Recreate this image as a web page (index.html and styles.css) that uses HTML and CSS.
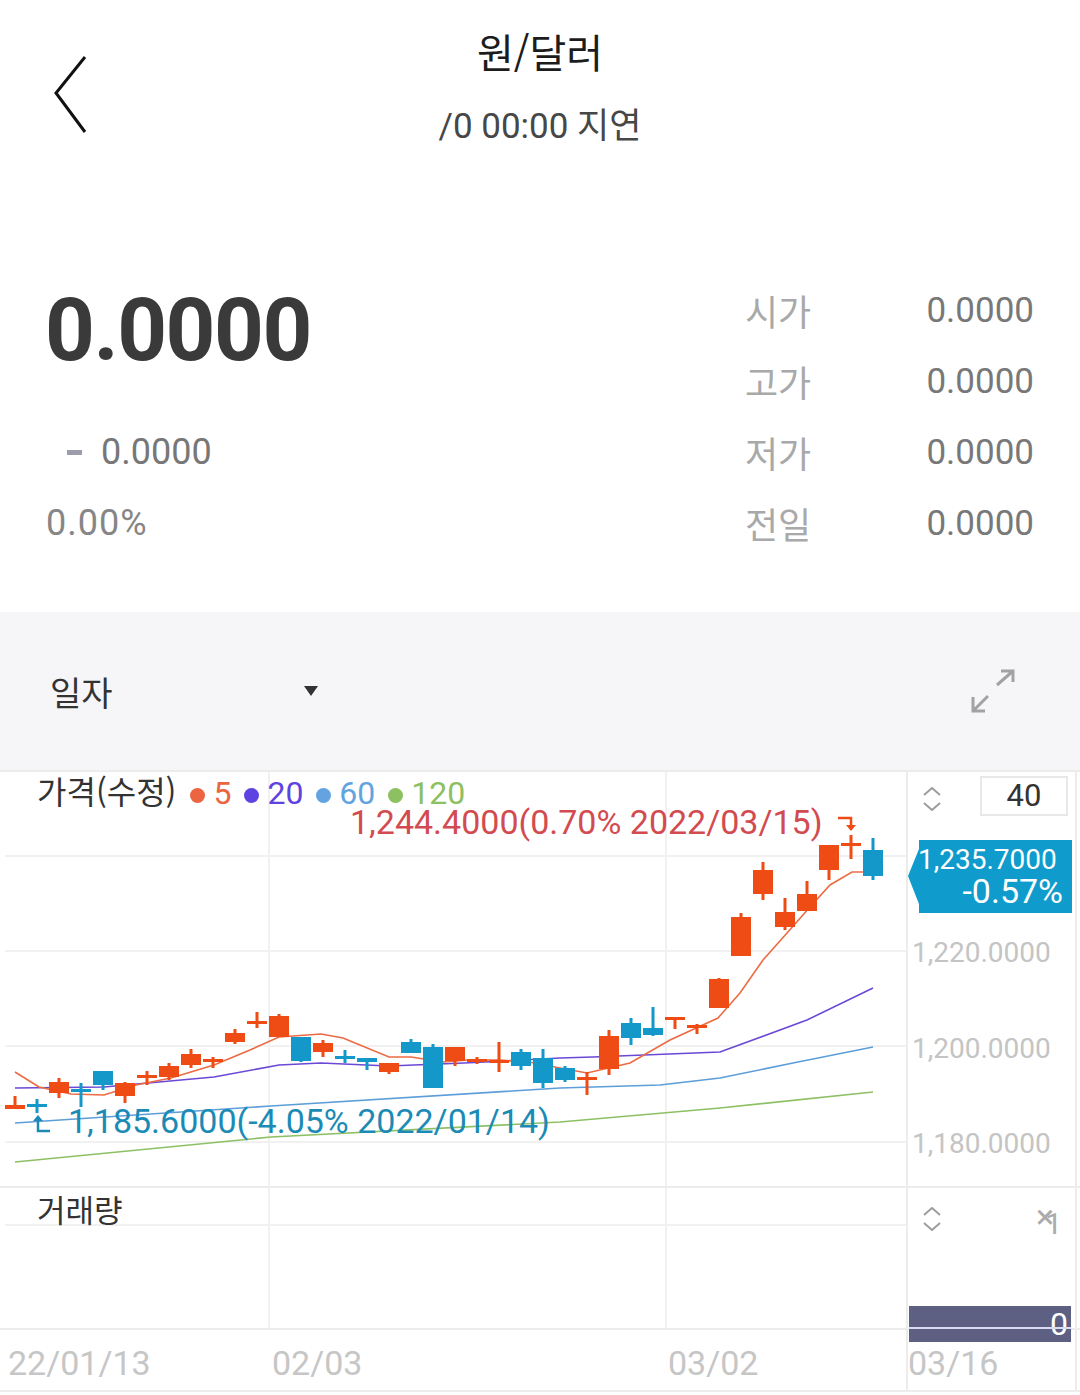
FILE: index.html
```html
<!DOCTYPE html>
<html lang="ko">
<head>
  <meta charset="UTF-8">
  <meta name="viewport" content="width=device-width, initial-scale=1.0">
  <title>원/달러</title>
  <link rel="stylesheet" href="styles.css">
</head>
<body>
<div class="screen">
  <header class="top-bar">
    <button class="back-btn" aria-label="뒤로">
      <svg width="40" height="82" viewBox="0 0 40 82"><polyline points="35,4 6,40 35,79" fill="none" stroke="#111" stroke-width="3"/></svg>
    </button>
    <div class="title-block">
      <h1 class="title">원/달러</h1>
      <div class="subtitle">/0 00:00 지연</div>
    </div>
    <div></div>
  </header>

  <section class="quote">
    <div class="quote-main">
      <div class="price">0.0000</div>
      <div class="change"><span class="change-mark"></span>0.0000</div>
      <div class="rate">0.00%</div>
    </div>
    <dl class="quote-table">
      <dt>시가</dt><dd>0.0000</dd>
      <dt>고가</dt><dd>0.0000</dd>
      <dt>저가</dt><dd>0.0000</dd>
      <dt>전일</dt><dd>0.0000</dd>
    </dl>
  </section>

  <div class="chart-toolbar">
    <div class="period-select">
      <span>일자</span>
      <span class="caret"></span>
    </div>
    <svg class="expand-icon" width="48" height="48" viewBox="0 0 48 48">
      <path d="M28 18L44 4M32 4H44V15M19 29L4 44M4 30V44H16" fill="none" stroke="#a2a2a2" stroke-width="3"/>
    </svg>
  </div>

  <section class="chart">
    <div class="pane pane-price">
      <div class="plot">
        <svg class="plot-svg" width="906" height="414" viewBox="0 772 906 414">
          <path class="grid-line" d="M5 856H906M5 951H906M5 1046H906M5 1142H906M269 772V1186M666 772V1186"/>
          <polyline class="ma ma120" points="15,1162 271,1137 560,1122 720,1108 873,1092"/>
          <polyline class="ma ma60" points="15,1123 271,1106 560,1088 660,1085 720,1078 793,1063 873,1047"/>
          <polyline class="ma ma20" points="15,1088 104,1087 214,1077 279,1065 321,1063 389,1066 464,1063 560,1058 593,1057 720,1052 807,1020 873,988"/>
          <polyline class="ma ma5" points="15,1072 39,1087 71,1094 104,1095 136,1085 171,1078 214,1065 250,1050 279,1037 321,1034 343,1038 389,1057 411,1057 443,1062 468,1060 500,1060 529,1062 560,1068 587,1073 630,1063 670,1040 718,1018 740,993 763,960 787,933 810,907 830,885 852,872 873,872"/>

          <g class="candle-up">
            <path class="wick" d="M15 1096V1109M59 1078V1098M125 1082V1103M147 1071V1085M169 1063V1080M191 1049V1068M213 1057V1068M235 1029V1044M257 1012V1028M279 1014V1037M323 1040V1057M389 1063V1074M455 1047V1066M477 1057V1064M499 1042V1072M587 1072V1095M609 1030V1075M675 1017V1029M697 1024V1034M719 978V1008M741 913V956M763 862V900M785 898V930M807 881V911M829 845V880M851 835V859"/>
            <rect x="5" y="1105" width="20" height="4"/>
            <rect x="49" y="1082" width="20" height="11"/>
            <rect x="115" y="1083" width="20" height="13"/>
            <rect x="137" y="1075" width="20" height="3"/>
            <rect x="159" y="1066" width="20" height="11"/>
            <rect x="181" y="1054" width="20" height="11"/>
            <rect x="203" y="1059" width="20" height="3"/>
            <rect x="225" y="1033" width="20" height="9"/>
            <rect x="247" y="1021" width="20" height="3"/>
            <rect x="269" y="1016" width="20" height="21"/>
            <rect x="313" y="1043" width="20" height="9"/>
            <rect x="379" y="1063" width="20" height="9"/>
            <rect x="445" y="1047" width="20" height="14"/>
            <rect x="467" y="1059" width="20" height="3"/>
            <rect x="489" y="1060" width="20" height="3"/>
            <rect x="577" y="1077" width="20" height="3"/>
            <rect x="599" y="1036" width="20" height="33"/>
            <rect x="665" y="1017" width="20" height="3"/>
            <rect x="687" y="1025" width="20" height="3"/>
            <rect x="709" y="979" width="20" height="29"/>
            <rect x="731" y="917" width="20" height="39"/>
            <rect x="753" y="870" width="20" height="24"/>
            <rect x="775" y="912" width="20" height="15"/>
            <rect x="797" y="894" width="20" height="17"/>
            <rect x="819" y="845" width="20" height="25"/>
            <rect x="841" y="843" width="20" height="3"/>
          </g>

          <g class="candle-down">
            <path class="wick" d="M37 1099V1113M81 1083V1107M103 1071V1090M301 1037V1062M345 1050V1063M367 1058V1070M411 1039V1053M433 1044V1088M521 1049V1070M543 1049V1088M565 1066V1082M631 1018V1045M653 1007V1036M873 838V880"/>
            <rect x="27" y="1104" width="20" height="3"/>
            <rect x="71" y="1089" width="20" height="3"/>
            <rect x="93" y="1071" width="20" height="14"/>
            <rect x="291" y="1037" width="20" height="24"/>
            <rect x="335" y="1056" width="20" height="3"/>
            <rect x="357" y="1058" width="20" height="4"/>
            <rect x="401" y="1042" width="20" height="11"/>
            <rect x="423" y="1047" width="20" height="41"/>
            <rect x="511" y="1052" width="20" height="14"/>
            <rect x="533" y="1058" width="20" height="25"/>
            <rect x="555" y="1068" width="20" height="12"/>
            <rect x="621" y="1023" width="20" height="15"/>
            <rect x="643" y="1028" width="20" height="7"/>
            <rect x="863" y="850" width="20" height="26"/>
          </g>

          <g class="mark-max">
            <path d="M838 818H851V826" fill="none"/>
            <polygon points="846,825 856,825 851,831"/>
          </g>
          <g class="mark-min">
            <path d="M38 1120V1131H50" fill="none"/>
            <polygon points="33,1121 43,1121 38,1115"/>
          </g>
          <text class="mark-label label-max" x="350" y="834">1,244.4000(0.70% 2022/03/15)</text>
          <text class="mark-label label-min" x="68" y="1133">1,185.6000(-4.05% 2022/01/14)</text>
        </svg>
        <div class="legend">
          <span class="legend-title">가격(수정)</span><span class="legend-item c-ma5"><i class="dot first"></i>5</span><span class="legend-item c-ma20"><i class="dot"></i>20</span><span class="legend-item c-ma60"><i class="dot"></i>60</span><span class="legend-item c-ma120"><i class="dot"></i>120</span>
        </div>
      </div>
      <div class="axis">
        <div class="axis-controls">
          <svg class="chev" width="18" height="24" viewBox="0 0 18 24"><path d="M1 8L9 1L17 8M1 16L9 23L17 16" fill="none" stroke="#9d9d9d" stroke-width="2"/></svg>
          <div class="scale-box">40</div>
        </div>
        <div class="axis-ticks">
          <div class="tick">1,220.0000</div>
          <div class="tick">1,200.0000</div>
          <div class="tick">1,180.0000</div>
        </div>
        <div class="price-tag">
          <div class="tag-price">1,235.7000</div>
          <div class="tag-rate">-0.57%</div>
        </div>
      </div>
    </div>

    <div class="pane pane-volume">
      <div class="plot">
        <svg class="plot-svg" width="906" height="140" viewBox="0 1188 906 140">
          <path class="grid-line" d="M5 1225H906M269 1188V1328M666 1188V1328"/>
        </svg>
        <div class="pane-title">거래량</div>
      </div>
      <div class="axis">
        <div class="vol-controls">
          <svg class="chev" width="18" height="24" viewBox="0 0 18 24"><path d="M1 8L9 1L17 8M1 16L9 23L17 16" fill="none" stroke="#9d9d9d" stroke-width="2"/></svg>
          <span class="vol-scale">×<span class="vol-scale-num">1</span></span>
        </div>
        <div class="vol-bar">0</div>
      </div>
    </div>

    <div class="pane pane-dates">
      <div class="date-ticks">
        <span>22/01/13</span>
        <span>02/03</span>
        <span>03/02</span>
      </div>
      <div class="axis">
        <span class="date-last">03/16</span>
      </div>
    </div>
  </section>
</div>
</body>
</html>
```

FILE: styles.css
```css
* {
  box-sizing: border-box;
}
body {
  margin: 0;
  background: #fff;
  font-family: Roboto, "Noto Sans CJK KR", sans-serif;
  color: #333;
}
.screen {
  width: 1080px;
  height: 1395px;
  overflow: hidden;
}

/* header */
.top-bar {
  display: grid;
  grid-template-columns: 1fr auto 1fr;
  height: 170px;
}
.back-btn {
  justify-self: start;
  align-self: start;
  width: 40px;
  height: 82px;
  margin: 53px 0 0 50px;
  padding: 0;
  border: 0;
  background: none;
}
.back-btn svg {
  display: block;
}
.title-block {
  text-align: center;
  padding-top: 25px;
}
.title {
  margin: 0;
  font-family: "Noto Sans CJK KR", sans-serif;
  font-size: 40px;
  font-weight: 400;
  line-height: 52px;
  color: #1c1c1c;
}
.subtitle {
  margin-top: 27px;
  font-size: 35px;
  line-height: 46px;
  color: #474747;
}

/* quote */
.quote {
  display: flex;
  justify-content: space-between;
  padding: 105px 46px 53px 46px;
}
.price {
  margin: 12px 0 0 -1px;
  font-size: 87px;
  font-weight: 700;
  line-height: 87px;
  letter-spacing: -1.5px;
  color: #3a3a3a;
}
.change {
  display: flex;
  align-items: center;
  height: 71px;
  margin-top: 43px;
  padding-left: 21px;
  font-size: 36px;
  line-height: 71px;
  color: #777;
}
.change-mark {
  width: 15px;
  height: 5px;
  margin-right: 19px;
  background: #9b9dab;
}
.rate {
  font-size: 36px;
  line-height: 71px;
  letter-spacing: 1px;
  color: #868686;
}
.quote-table {
  display: grid;
  grid-template-columns: auto 1fr;
  width: 289px;
  margin: 0;
}
.quote-table dt {
  font-family: "Noto Sans CJK KR", sans-serif;
  font-size: 36px;
  line-height: 71px;
  color: #a9a9a9;
}
.quote-table dd {
  margin: 0;
  text-align: right;
  font-size: 35px;
  line-height: 71px;
  color: #787878;
}

/* toolbar */
.chart-toolbar {
  display: flex;
  align-items: center;
  justify-content: space-between;
  height: 158px;
  padding: 0 63px 0 50px;
  background: #f6f6f8;
}
.period-select {
  display: flex;
  align-items: center;
  justify-content: space-between;
  width: 268px;
  font-family: "Noto Sans CJK KR", sans-serif;
  font-size: 34px;
  color: #333;
}
.caret {
  width: 0;
  height: 0;
  border-left: 7.5px solid transparent;
  border-right: 7.5px solid transparent;
  border-top: 10px solid #333;
}
.expand-icon {
  display: block;
}

/* chart */
.chart {
  border-top: 2px solid #ececec;
}
.pane {
  display: grid;
  grid-template-columns: 906px 171px;
  grid-template-rows: minmax(0, 1fr);
  border-bottom: 2px solid #ececec;
}
.pane-price {
  height: 416px;
}
.pane-volume {
  height: 142px;
}
.pane-dates {
  height: 62px;
}
.plot {
  position: relative;
}
.plot-svg {
  display: block;
}
.grid-line {
  fill: none;
  stroke: #f1f1f1;
  stroke-width: 2;
}
.ma {
  fill: none;
  stroke-width: 1.6;
}
.ma5 { stroke: #ec6b43; }
.ma20 { stroke: #6b48d6; }
.ma60 { stroke: #5d9ed8; }
.ma120 { stroke: #8dc064; }

.candle-up { fill: #ef4b14; }
.candle-up .wick { stroke: #ef4b14; stroke-width: 3; fill: none; }
.candle-down { fill: #1498c9; }
.candle-down .wick { stroke: #1498c9; stroke-width: 3; fill: none; }

.mark-max { fill: #ef4b14; stroke: #ef4b14; stroke-width: 2.5; }
.mark-max polygon { stroke: none; }
.mark-min { fill: #1b8bb6; stroke: #1b8bb6; stroke-width: 2.5; }
.mark-min polygon { stroke: none; }
.mark-label {
  font-family: Roboto, sans-serif;
  font-size: 34px;
}
.label-max { fill: #d24b50; }
.label-min { fill: #1b8bb6; }

.legend {
  position: absolute;
  top: 0;
  left: 37px;
  white-space: nowrap;
  font-size: 32px;
  line-height: 36px;
}
.legend-title {
  font-family: "Noto Sans CJK KR", sans-serif;
  font-size: 32px;
  color: #333;
}
.dot {
  display: inline-block;
  width: 15px;
  height: 15px;
  margin: 0 8px 0 13px;
  border-radius: 50%;
  background: currentColor;
  vertical-align: middle;
}
.dot.first {
  margin-left: 14px;
}
.c-ma5 { color: #ea6540; }
.c-ma20 { color: #5f43e0; }
.c-ma60 { color: #62a3e0; }
.c-ma120 { color: #8dc060; }

.pane-title {
  position: absolute;
  top: 0;
  left: 37px;
  font-family: "Noto Sans CJK KR", sans-serif;
  font-size: 31px;
  line-height: 42px;
  color: #333;
}

/* right axis */
.axis {
  position: relative;
  border-left: 2px solid #ececec;
  border-right: 2px solid #ececec;
}
.axis-controls {
  display: flex;
  align-items: center;
  padding: 4px 7px 0 15px;
}
.chev {
  display: block;
  margin-top: 6px;
}
.scale-box {
  width: 88px;
  height: 40px;
  margin-left: auto;
  border: 2px solid #e8e8e8;
  text-align: center;
  font-size: 31px;
  line-height: 36px;
  color: #333;
}
.axis-ticks {
  margin-top: 89px;
}
.tick {
  padding-left: 4px;
  font-size: 28px;
  line-height: 95.5px;
  color: #c4c4c4;
}
.price-tag {
  position: absolute;
  top: 68px;
  left: 0;
  width: 164px;
  height: 73px;
  padding-top: 5px;
  background: #0f9bcc;
  color: #fff;
  clip-path: polygon(11px 0, 100% 0, 100% 100%, 11px 100%, 11px 64px, 0 36px, 11px 9px);
}
.tag-price {
  padding-left: 10px;
  font-size: 28px;
  line-height: 30px;
}
.tag-rate {
  margin-top: -1px;
  padding-right: 9px;
  text-align: right;
  font-size: 34px;
  line-height: 34px;
}
.vol-controls {
  display: flex;
  justify-content: space-between;
  align-items: flex-start;
  padding: 13px 13px 0 15px;
}
.vol-scale {
  display: flex;
  font-size: 34px;
  line-height: 30px;
  color: #ababab;
}
.vol-scale-num {
  margin: 8px 0 0 -9px;
  font-size: 30px;
}
.vol-bar {
  position: absolute;
  left: 1px;
  top: 118px;
  z-index: 1;
  width: 162px;
  height: 36px;
  padding-right: 3px;
  background: #5d6082;
  color: #fff;
  text-align: right;
  font-size: 32px;
  line-height: 36px;
}
.vol-bar::after {
  content: '';
  position: absolute;
  left: 0;
  right: 0;
  top: 21px;
  height: 2px;
  background: #d9dcee;
}

/* dates */
.date-ticks {
  display: grid;
  grid-template-columns: 264px 396px auto;
  padding: 7px 0 0 8px;
  font-size: 34px;
  line-height: 53px;
  color: #c6c6c6;
}
.date-last {
  display: block;
  padding-top: 7px;
  font-size: 34px;
  line-height: 53px;
  color: #c6c6c6;
}
```
